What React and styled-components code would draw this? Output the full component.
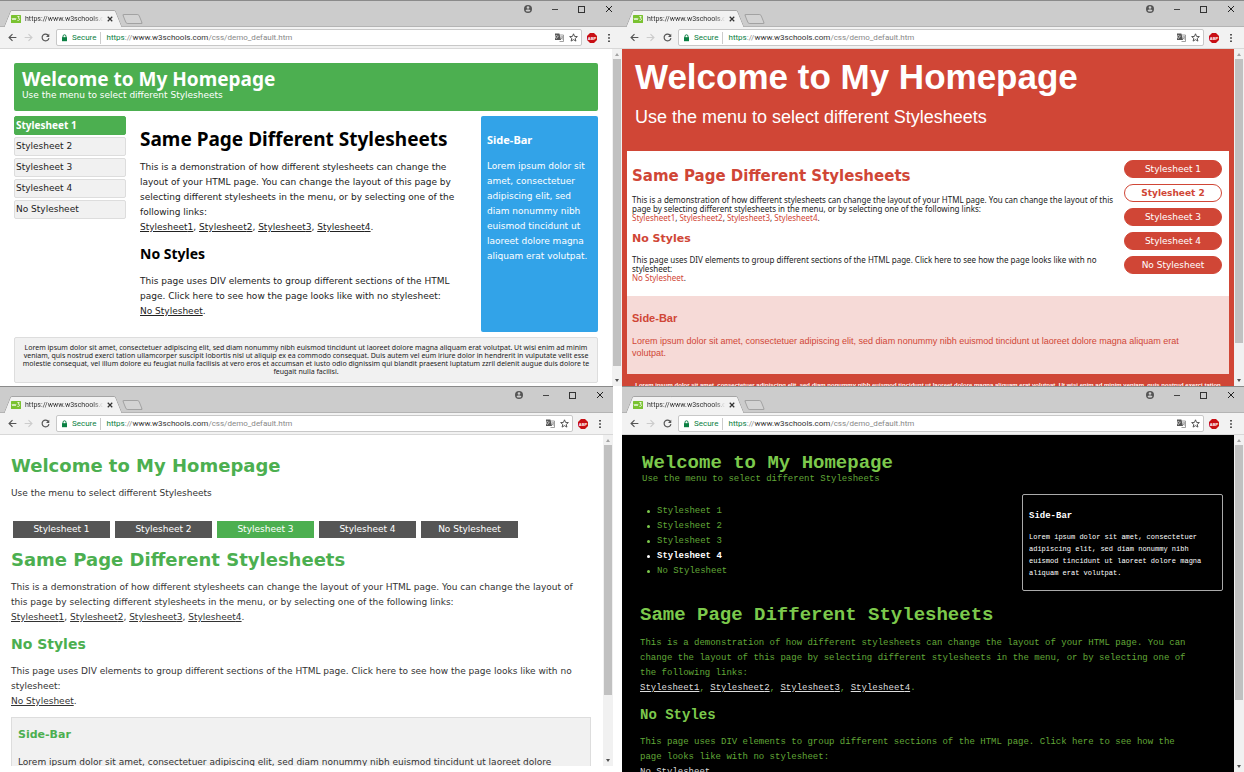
import React from 'react';
import styled, { createGlobalStyle, css } from 'styled-components';

const LUCIDA = '"Noto Sans", "Open Sans", sans-serif';
const VERDANA = '"DejaVu Sans", sans-serif';
const ARIAL = '"Liberation Sans", sans-serif';
const COURIER = '"Liberation Mono", monospace';
const UI = 'Roboto, sans-serif';

const GlobalStyle = createGlobalStyle`
  *, *::before, *::after { box-sizing: border-box; }
  body { margin: 0; background: #fff; }
  h1, h2, h3, p, ul { margin: 0; padding: 0; }
  ul { list-style: none; }
  button { border: 0; padding: 0; background: none; }
`;

/* ---------- browser window ---------- */

const Desktop = styled.main`
  display: grid;
  grid-template-columns: minmax(0, 1fr) minmax(0, 1fr);
  grid-template-rows: minmax(0, 1fr) minmax(0, 1fr);
  height: 100vh;
  overflow: hidden;
`;

const Frame = styled.section`
  display: flex;
  flex-direction: column;
  min-width: 0;
  min-height: 0;
  overflow: hidden;
  ${(p) => p.$inset && css`margin: 0 9px 6px 0;`}
`;

const TitleBar = styled.header`
  display: flex;
  flex: none;
  height: 27px;
  padding-left: 7px;
  border-top: 1px solid #8a8a8a;
  background: #ccc;
  border-bottom: 1px solid #b4b4b4;
`;

const Tab = styled.div`
  position: relative;
  z-index: 0;
  display: flex;
  align-items: center;
  gap: 4px;
  width: 112px;
  height: 17px;
  margin-top: 9px;
  padding: 0 6px 0 4px;
  &::before,
  &::after {
    content: '';
    position: absolute;
    z-index: -1;
    top: 0;
    bottom: 0;
    width: 60%;
    background: #f2f2f2;
    border-top: 1px solid #a5a5a5;
  }
  &::before {
    left: 0;
    border-left: 1px solid #a5a5a5;
    border-top-left-radius: 2px;
    transform: skewX(-22deg);
  }
  &::after {
    right: 0;
    border-right: 1px solid #a5a5a5;
    border-top-right-radius: 2px;
    transform: skewX(22deg);
  }
`;

const TabTitle = styled.span`
  flex: 1;
  overflow: hidden;
  white-space: nowrap;
  font: 7px/12px ${UI};
  color: #333;
  mask-image: linear-gradient(to right, #000 88%, transparent);
`;

const IconButton = styled.button`
  display: flex;
  align-items: center;
  justify-content: center;
  width: ${(p) => p.$w}px;
  color: ${(p) => p.$color || '#555'};
`;

const NewTab = styled.button`
  width: 17px;
  height: 10px;
  margin: 13px 0 0 5px;
  border: 1px solid #a2a2a2;
  border-radius: 2px;
  background: #d3d3d3;
  transform: skewX(22deg);
`;

const WindowButtons = styled.div`
  display: flex;
  height: 16px;
  margin-left: auto;
`;

const Toolbar = styled.div`
  display: flex;
  align-items: center;
  flex: none;
  height: 22px;
  padding: 0 4px;
  background: #f2f2f2;
  border-bottom: 1px solid #d8d8d8;
`;

const AddressBar = styled.div`
  display: flex;
  align-items: center;
  flex: 1;
  height: 17px;
  margin: 0 1px 0 2px;
  padding: 0 0 0 4px;
  border: 1px solid #c8c8c8;
  border-radius: 2px;
  background: #fff;
  font: 8px/12px ${UI};
  white-space: nowrap;
`;

const Secure = styled.span`
  margin-left: 4px;
  padding-right: 4px;
  border-right: 1px solid #ccc;
  color: #0b8043;
`;

const Address = styled.div`
  flex: 1;
  overflow: hidden;
  padding-left: 5px;
  color: #888;
  b { font-weight: 400; color: #333; }
  i { font-style: normal; color: #0b8043; }
`;

const Viewport = styled.div`
  display: flex;
  flex: 1;
  min-height: 0;
`;

const Scrollbar = styled.div`
  display: flex;
  flex-direction: column;
  align-items: center;
  justify-content: space-between;
  flex: none;
  width: 10px;
  background: #f1f1f1;
`;

const Thumb = styled.div`
  width: 8px;
  flex: 0 1 ${(p) => p.$size}px;
  margin-bottom: auto;
  background: #c1c1c1;
`;

const ArrowCell = styled.div`
  display: flex;
  align-items: center;
  justify-content: center;
  flex: none;
  height: ${(p) => p.$h}px;
`;

const Page = styled.div`
  flex: 1;
  min-width: 0;
  overflow: hidden;
`;

const Favicon = () => (
  <svg width="10" height="8" viewBox="0 0 10 8" aria-hidden="true">
    <rect width="10" height="8" rx="0.5" fill="#7ac231" />
    <path d="M1 3l1 2 1-2 1 2 1-2" fill="none" stroke="#fff" strokeWidth="0.8" />
    <path d="M6.4 1.5h1.8L7.4 3.2c1.8 0 1.4 2.8-1 2.2" fill="none" stroke="#fff" strokeWidth="0.8" />
  </svg>
);

const Cross = ({ size, width }) => (
  <svg width={size} height={size} viewBox="0 0 8 8" aria-hidden="true">
    <path d="M1 1l6 6M7 1L1 7" stroke="currentColor" strokeWidth={width} />
  </svg>
);

const Arrow = ({ back }) => (
  <svg width="9" height="9" viewBox="0 0 10 10" aria-hidden="true">
    <path
      d={back ? 'M9.3 5H1.4M5 1.2L1.2 5 5 8.8' : 'M.7 5h7.9M5 1.2L8.8 5 5 8.8'}
      fill="none"
      stroke="currentColor"
      strokeWidth="1.3"
    />
  </svg>
);

const Browser = ({ children, thumb, inset, label }) => (
  <Frame $inset={inset} aria-label={label}>
    <TitleBar>
      <Tab>
        <Favicon />
        <TabTitle>https://www.w3schools.com</TabTitle>
        <IconButton $w={6} $color="#333" aria-label="Close tab"><Cross size={6} width={1.6} /></IconButton>
      </Tab>
      <NewTab aria-label="New tab" />
      <WindowButtons>
        <IconButton $w={27} aria-label="Profile">
          <svg width="8" height="8" viewBox="0 0 8 8" aria-hidden="true">
            <circle cx="4" cy="4" r="4" fill="#555" />
            <circle cx="4" cy="2.5" r="1.3" fill="#ccc" />
            <path d="M1.6 5.4c.5-1.2 4.3-1.2 4.8 0-1 1.6-3.8 1.6-4.8 0z" fill="#ccc" />
          </svg>
        </IconButton>
        <IconButton $w={27} aria-label="Minimise">
          <svg width="6" height="7" viewBox="0 0 6 7" aria-hidden="true">
            <path d="M0 3.5h6" stroke="#444" />
          </svg>
        </IconButton>
        <IconButton $w={27} aria-label="Maximise">
          <svg width="7" height="7" viewBox="0 0 7 7" aria-hidden="true">
            <rect x=".5" y=".5" width="6" height="6" fill="none" stroke="#333" />
          </svg>
        </IconButton>
        <IconButton $w={27} $color="#222" aria-label="Close"><Cross size={8} width={1} /></IconButton>
      </WindowButtons>
    </TitleBar>
    <Toolbar>
      <IconButton $w={17} aria-label="Back"><Arrow back /></IconButton>
      <IconButton $w={15} $color="#ccc" aria-label="Forward"><Arrow /></IconButton>
      <IconButton $w={18} aria-label="Reload">
        <svg width="9" height="9" viewBox="0 0 10 10" aria-hidden="true">
          <path d="M8.3 3A3.8 3.8 0 1 0 8.8 5.6" fill="none" stroke="#555" strokeWidth="1.3" />
          <path d="M9.2.8v3.6H5.6z" fill="#555" />
        </svg>
      </IconButton>
      <AddressBar>
        <svg width="7" height="8" viewBox="0 0 7 8" aria-hidden="true">
          <path d="M2 4V2.3a1.5 1.5 0 0 1 3 0V4" fill="none" stroke="#0b8043" />
          <rect x="1" y="3.2" width="5" height="4" fill="#0b8043" />
        </svg>
        <Secure>Secure</Secure>
        <Address role="textbox" aria-label="Address" tabIndex={0}>
          <i>https</i>://<b>www.w3schools.com</b>/css/demo_default.htm
        </Address>
        <IconButton $w={14} aria-label="Translate">
          <svg width="9" height="9" viewBox="0 0 9 9" aria-hidden="true">
            <path d="M3.5 2H8.5V8.5H4.5" fill="#fff" stroke="#888" strokeWidth=".8" />
            <path d="M0 .5h4.4L6 7H0z" fill="#555" />
            <path d="M3.6 3.2H2.4a1.3 1.3 0 1 0 .1 1.1" fill="none" stroke="#fff" strokeWidth=".7" />
            <path d="M5.6 3.8h2.4M7.4 3.8c0 1.4-.8 2-1.3 2.4M6.2 4.6l1.6 2" fill="none" stroke="#666" strokeWidth=".6" />
          </svg>
        </IconButton>
        <IconButton $w={15} aria-label="Bookmark">
          <svg width="9" height="9" viewBox="0 0 10 10" aria-hidden="true">
            <path d="M5 .9l1.2 2.9 3.1.2-2.4 2 .8 3L5 7.4 2.3 9l.8-3L.7 4l3.1-.2z" fill="none" stroke="#444" strokeWidth="1" />
          </svg>
        </IconButton>
      </AddressBar>
      <IconButton $w={17} aria-label="Ad blocker">
        <svg width="10" height="10" viewBox="0 0 10 10" aria-hidden="true">
          <path d="M3 0h4l3 3v4l-3 3H3L0 7V3z" fill="#c80f14" />
          <text x="5" y="6.6" textAnchor="middle" fontFamily="Liberation Sans" fontWeight="700" fontSize="4" fill="#fff">ABP</text>
        </svg>
      </IconButton>
      <IconButton $w={18} aria-label="Menu">
        <svg width="2" height="8" viewBox="0 0 2 8" aria-hidden="true">
          <path d="M0 0h2v1.5H0zM0 3.2h2v1.5H0zM0 6.4h2V8H0z" fill="#555" />
        </svg>
      </IconButton>
    </Toolbar>
    <Viewport>
      {children}
      <Scrollbar aria-hidden="true">
        <ArrowCell $h={10}>
          <svg width="4" height="3" viewBox="0 0 4 3"><path d="M0 3l2-3 2 3z" fill="#a3a3a3" /></svg>
        </ArrowCell>
        <Thumb $size={thumb} />
        <ArrowCell $h={12}>
          <svg width="4" height="3" viewBox="0 0 4 3"><path d="M0 0l2 3 2-3z" fill="#505050" /></svg>
        </ArrowCell>
      </Scrollbar>
    </Viewport>
  </Frame>
);

/* ---------- shared text blocks ---------- */

const SHEETS = ['Stylesheet 1', 'Stylesheet 2', 'Stylesheet 3', 'Stylesheet 4', 'No Stylesheet'];

const Line = styled.span`
  display: block;
  white-space: nowrap;
`;

const Lines = ({ of }) => of.map((text) => <Line key={text}>{text}</Line>);

const Links = () => (
  <Line>
    {[1, 2, 3, 4].map((n) => (
      <React.Fragment key={n}>
        <a href={`#sheet${n}`}>Stylesheet{n}</a>
        {n < 4 ? ', ' : '.'}
      </React.Fragment>
    ))}
  </Line>
);

const NoLink = () => (
  <Line>
    <a href="#none">No Stylesheet</a>.
  </Line>
);

const Menu = ({ as: Item, active }) =>
  SHEETS.map((name, i) => (
    <li key={name}>
      <Item href={`#${i}`} $on={i === active}>{name}</Item>
    </li>
  ));

/* ---------- stylesheet 1 ---------- */

const PageOne = styled(Page)`
  display: flex;
  flex-direction: column;
  gap: 5px;
  padding: 14px 14px 3px;
  font: 9px/15px ${VERDANA};
  color: #222;
  a { color: inherit; }
  h1, h2, h3 { font-family: ${LUCIDA}; }
`;

const BannerOne = styled.header`
  padding: 6px 8px 10px;
  border-radius: 2px;
  background: #4caf50;
  color: #fff;
  line-height: 12px;
  h1 { font-size: 19px; line-height: 20px; }
`;

const ColumnsOne = styled.div`
  display: grid;
  grid-template-columns: 112px minmax(0, 1fr) 117px;
  column-gap: 14px;
  flex: 1;
`;

const MenuOne = styled.ul`
  display: flex;
  flex-direction: column;
  gap: 2px;
`;

const ItemOne = styled.a`
  display: block;
  height: 19px;
  padding: 0 1px;
  border: 1px solid ${(p) => (p.$on ? '#4caf50' : '#ddd')};
  border-radius: 2px;
  background: ${(p) => (p.$on ? '#4caf50' : '#f1f1f1')};
  font: ${(p) => (p.$on ? `700 10px/17px ${LUCIDA}` : `9px/17px ${VERDANA}`)};
  text-decoration: none;
  && { color: ${(p) => (p.$on ? '#fff' : '#222')}; }
`;

const MainOne = styled.article`
  padding-top: 11px;
  h1 { margin-bottom: 9px; font-size: 19px; line-height: 24px; color: #000; }
  h2 { margin: 9px 0 10px; font-size: 14px; line-height: 20px; color: #000; }
`;

const AsideOne = styled.aside`
  padding: 16px 6px 0;
  border-radius: 2px;
  background: #32a3e8;
  color: #fff;
  h3 { margin-bottom: 11px; font-size: 11px; line-height: 16px; }
`;

const FooterOne = styled.footer`
  padding: 6px 0;
  border: 1px solid #ddd;
  border-radius: 2px;
  background: #f1f1f1;
  font: 7px/8px ${LUCIDA};
  text-align: center;
`;

/* ---------- stylesheet 2 ---------- */

const PageTwo = styled(Page)`
  padding: 10px 5px 0;
  background: #d04636;
  font: 8px/9px ${LUCIDA};
  color: #222;
  a { color: #d04636; text-decoration: none; }
`;

const BannerTwo = styled.header`
  padding: 0 8px 22px;
  color: #fff;
  font: 18px/24px ${ARIAL};
  h1 { margin-bottom: 10px; font-size: 35px; line-height: 36px; }
`;

const BodyTwo = styled.div`
  display: flex;
  justify-content: space-between;
  padding: 9px 7px 0 5px;
  min-height: 145px;
  background: #fff;
`;

const MainTwo = styled.article`
  padding-top: 6px;
  h1, h2 { color: #d04636; font-family: ${VERDANA}; }
  h1 { margin-bottom: 9px; font-size: 15px; line-height: 20px; }
  h2 { margin: 9px 0 8px; font-size: 11px; line-height: 16px; }
`;

const MenuTwo = styled.ul`
  display: flex;
  flex-direction: column;
  gap: 6px;
  flex: 0 0 98px;
`;

const ItemTwo = styled.a`
  display: block;
  height: 18px;
  border: 1px solid #d04636;
  border-radius: 9px;
  background: ${(p) => (p.$on ? '#fff' : '#d04636')};
  font: ${(p) => (p.$on ? 700 : 400)} 9px/17px ${VERDANA};
  text-align: center;
  && { color: ${(p) => (p.$on ? '#d04636' : '#fff')}; }
`;

const AsideTwo = styled.aside`
  height: 78px;
  padding: 14px 5px 0;
  background: #f6dad7;
  color: #d04636;
  font: 9px/12px ${ARIAL};
  h3 { margin-bottom: 9px; font-size: 11px; line-height: 16px; }
`;

const FooterTwo = styled.footer`
  padding-top: 7px;
  color: #fff;
  font: 700 6px/8px ${ARIAL};
  text-align: center;
`;

/* ---------- stylesheet 3 ---------- */

const PageThree = styled(Page)`
  padding: 19px 12px 0 11px;
  font: 9px/15px ${VERDANA};
  color: #333;
  a { color: inherit; }
  h1, h2, h3 { color: #4caf50; }
  h1 { font-size: 18px; line-height: 24px; }
  h2 { margin: 9px 0 10px; font-size: 14px; line-height: 20px; }
`;

const BannerThree = styled.header`
  h1 { margin-bottom: 8px; }
`;

const MenuThree = styled.ul`
  display: flex;
  gap: 5px;
  margin: 20px 0 10px;
  padding-left: 2px;
`;

const ItemThree = styled.a`
  display: block;
  width: 97px;
  height: 17px;
  background: ${(p) => (p.$on ? '#4caf50' : '#555')};
  line-height: 17px;
  text-align: center;
  text-decoration: none;
  && { color: #fff; }
`;

const MainThree = styled.article`
  h1 { margin-bottom: 8px; }
`;

const AsideThree = styled.aside`
  margin-top: 8px;
  padding: 9px 6px 20px;
  border: 1px solid #ddd;
  background: #f1f1f1;
  h3 { margin-bottom: 12px; font-size: 11px; line-height: 16px; }
`;

/* ---------- stylesheet 4 ---------- */

const PageFour = styled(Page)`
  padding: 18px 11px 0 18px;
  background: #000;
  font: 9px/15px ${COURIER};
  color: #62a838;
  h1, h2 { color: #7cc94c; }
  h1 { font-size: 19px; }
`;

const BannerFour = styled.header`
  padding-left: 2px;
  line-height: 12px;
  h1 { line-height: 20px; }
`;

const RowFour = styled.div`
  display: flex;
  justify-content: space-between;
  align-items: flex-start;
  margin-top: 9px;
`;

const MenuFour = styled.ul`
  padding: 10px 0 0 7px;
  li { display: flex; }
`;

const ItemFour = styled.a`
  display: flex;
  align-items: center;
  color: ${(p) => (p.$on ? '#fff' : '#62a838')};
  font-weight: ${(p) => (p.$on ? 700 : 400)};
  text-decoration: none;
  &::before {
    content: '';
    width: 3px;
    height: 3px;
    margin-right: 7px;
    border-radius: 2px;
    background: ${(p) => (p.$on ? '#fff' : '#7cc94c')};
  }
`;

const AsideFour = styled.aside`
  width: 201px;
  height: 97px;
  padding: 14px 6px 0;
  border: 1px solid #aaa;
  border-radius: 2px;
  color: #fff;
  font-size: 7px;
  line-height: 12px;
  h3 { margin-bottom: 8px; font-size: 9px; line-height: 15px; }
  p { margin-top: -1px; }
`;

const MainFour = styled.article`
  padding-top: 12px;
  a { color: #ddd; }
  h1 { margin-bottom: 9px; line-height: 24px; }
  h2 { margin: 9px 0 10px; font-size: 14px; line-height: 20px; }
`;

export default function App() {
  return (
    <>
      <GlobalStyle />
      <Desktop>
        <Browser thumb={307} label="Stylesheet 1">
          <PageOne>
            <BannerOne>
              <h1>Welcome to My Homepage</h1>
              <p>Use the menu to select different Stylesheets</p>
            </BannerOne>
            <ColumnsOne>
              <MenuOne><Menu as={ItemOne} active={0} /></MenuOne>
              <MainOne>
                <h1>Same Page Different Stylesheets</h1>
                <p>
                  <Lines of={[
                    'This is a demonstration of how different stylesheets can change the',
                    'layout of your HTML page. You can change the layout of this page by',
                    'selecting different stylesheets in the menu, or by selecting one of the',
                    'following links:',
                  ]} />
                  <Links />
                </p>
                <h2>No Styles</h2>
                <p>
                  <Lines of={[
                    'This page uses DIV elements to group different sections of the HTML',
                    'page. Click here to see how the page looks like with no stylesheet:',
                  ]} />
                  <NoLink />
                </p>
              </MainOne>
              <AsideOne>
                <h3>Side-Bar</h3>
                <p>
                  <Lines of={[
                    'Lorem ipsum dolor sit',
                    'amet, consectetuer',
                    'adipiscing elit, sed',
                    'diam nonummy nibh',
                    'euismod tincidunt ut',
                    'laoreet dolore magna',
                    'aliquam erat volutpat.',
                  ]} />
                </p>
              </AsideOne>
            </ColumnsOne>
            <FooterOne>
              <Lines of={[
                'Lorem ipsum dolor sit amet, consectetuer adipiscing elit, sed diam nonummy nibh euismod tincidunt ut laoreet dolore magna aliquam erat volutpat. Ut wisi enim ad minim',
                'veniam, quis nostrud exerci tation ullamcorper suscipit lobortis nisl ut aliquip ex ea commodo consequat. Duis autem vel eum iriure dolor in hendrerit in vulputate velit esse',
                'molestie consequat, vel illum dolore eu feugiat nulla facilisis at vero eros et accumsan et iusto odio dignissim qui blandit praesent luptatum zzril delenit augue duis dolore te',
                'feugait nulla facilisi.',
              ]} />
            </FooterOne>
          </PageOne>
        </Browser>

        <Browser thumb={284} label="Stylesheet 2">
          <PageTwo>
            <BannerTwo>
              <h1>Welcome to My Homepage</h1>
              <p>Use the menu to select different Stylesheets</p>
            </BannerTwo>
            <BodyTwo>
              <MainTwo>
                <h1>Same Page Different Stylesheets</h1>
                <p>
                  <Lines of={[
                    'This is a demonstration of how different stylesheets can change the layout of your HTML page. You can change the layout of this',
                    'page by selecting different stylesheets in the menu, or by selecting one of the following links:',
                  ]} />
                  <Links />
                </p>
                <h2>No Styles</h2>
                <p>
                  <Lines of={[
                    'This page uses DIV elements to group different sections of the HTML page. Click here to see how the page looks like with no',
                    'stylesheet:',
                  ]} />
                  <NoLink />
                </p>
              </MainTwo>
              <MenuTwo><Menu as={ItemTwo} active={1} /></MenuTwo>
            </BodyTwo>
            <AsideTwo>
              <h3>Side-Bar</h3>
              <p>
                <Lines of={[
                  'Lorem ipsum dolor sit amet, consectetuer adipiscing elit, sed diam nonummy nibh euismod tincidunt ut laoreet dolore magna aliquam erat',
                  'volutpat.',
                ]} />
              </p>
            </AsideTwo>
            <FooterTwo>
              <Lines of={[
                'Lorem ipsum dolor sit amet, consectetuer adipiscing elit, sed diam nonummy nibh euismod tincidunt ut laoreet dolore magna aliquam erat volutpat. Ut wisi enim ad minim veniam, quis nostrud exerci tation',
              ]} />
            </FooterTwo>
          </PageTwo>
        </Browser>

        <Browser thumb={250} inset label="Stylesheet 3">
          <PageThree>
            <BannerThree>
              <h1>Welcome to My Homepage</h1>
              <p>Use the menu to select different Stylesheets</p>
            </BannerThree>
            <MenuThree><Menu as={ItemThree} active={2} /></MenuThree>
            <MainThree>
              <h1>Same Page Different Stylesheets</h1>
              <p>
                <Lines of={[
                  'This is a demonstration of how different stylesheets can change the layout of your HTML page. You can change the layout of',
                  'this page by selecting different stylesheets in the menu, or by selecting one of the following links:',
                ]} />
                <Links />
              </p>
              <h2>No Styles</h2>
              <p>
                <Lines of={[
                  'This page uses DIV elements to group different sections of the HTML page. Click here to see how the page looks like with no',
                  'stylesheet:',
                ]} />
                <NoLink />
              </p>
            </MainThree>
            <AsideThree>
              <h3>Side-Bar</h3>
              <p>
                <Lines of={[
                  'Lorem ipsum dolor sit amet, consectetuer adipiscing elit, sed diam nonummy nibh euismod tincidunt ut laoreet dolore',
                ]} />
              </p>
            </AsideThree>
          </PageThree>
        </Browser>

        <Browser thumb={255} label="Stylesheet 4">
          <PageFour>
            <BannerFour>
              <h1>Welcome to My Homepage</h1>
              <p>Use the menu to select different Stylesheets</p>
            </BannerFour>
            <RowFour>
              <MenuFour><Menu as={ItemFour} active={3} /></MenuFour>
              <AsideFour>
                <h3>Side-Bar</h3>
                <p>
                  <Lines of={[
                    'Lorem ipsum dolor sit amet, consectetuer',
                    'adipiscing elit, sed diam nonummy nibh',
                    'euismod tincidunt ut laoreet dolore magna',
                    'aliquam erat volutpat.',
                  ]} />
                </p>
              </AsideFour>
            </RowFour>
            <MainFour>
              <h1>Same Page Different Stylesheets</h1>
              <p>
                <Lines of={[
                  'This is a demonstration of how different stylesheets can change the layout of your HTML page. You can',
                  'change the layout of this page by selecting different stylesheets in the menu, or by selecting one of',
                  'the following links:',
                ]} />
                <Links />
              </p>
              <h2>No Styles</h2>
              <p>
                <Lines of={[
                  'This page uses DIV elements to group different sections of the HTML page. Click here to see how the',
                  'page looks like with no stylesheet:',
                ]} />
                <NoLink />
              </p>
            </MainFour>
          </PageFour>
        </Browser>
      </Desktop>
    </>
  );
}
